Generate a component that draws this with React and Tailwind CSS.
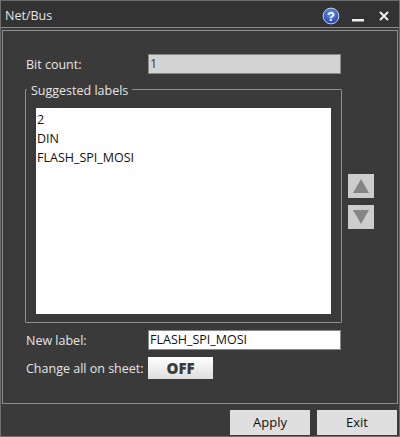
import React from 'react';

const Help = () => (
  <svg width="18" height="18" viewBox="0 0 18 18">
    <defs>
      <radialGradient id="helpBg" cx="50%" cy="35%" r="65%">
        <stop offset="0%" stopColor="#6f9bea" />
        <stop offset="100%" stopColor="#1c3fae" />
      </radialGradient>
    </defs>
    <circle cx="9" cy="9" r="7.9" fill="url(#helpBg)" stroke="#c9d3ea" strokeWidth="1" />
    <text x="9" y="14" textAnchor="middle" fontSize="13" fontWeight="700" fill="#fff" fontFamily="Liberation Sans, sans-serif">?</text>
  </svg>
);

const Arrow = ({ down }) => (
  <button className="w-[26px] h-[24px] bg-[#cdcdcd] flex items-center justify-center">
    <svg width="16" height="14" viewBox="0 0 16 14">
      <polygon points={down ? '0,0 16,0 8,14' : '0,14 16,14 8,0'} fill="#858585" />
    </svg>
  </button>
);

export default function App() {
  return (
    <div className="w-[400px] h-[437px] bg-[#3a3a3a] border border-[#6e6e6e] flex flex-col font-['Open_Sans','Noto_Sans',sans-serif] text-[12.5px] text-[#e6e6e6]">
      {/* Title bar */}
      <div className="h-[27px] flex items-center justify-between pl-[4px] pr-[9px] pt-[3px] bg-[#333333] border-b border-[#8a8a8a] shrink-0">
        <span className="text-[12.5px] pt-[1px]">Net/Bus</span>
        <div className="flex items-center">
          <Help />
          <svg width="14" height="14" viewBox="0 0 14 14" className="ml-[11px] mt-[2px]">
            <rect x="1" y="9" width="12" height="2.5" fill="#eeeeee" />
          </svg>
          <svg width="12" height="12" viewBox="0 0 12 12" className="ml-[13px]">
            <path d="M2 2 L10 10 M10 2 L2 10" stroke="#eeeeee" strokeWidth="2" />
          </svg>
        </div>
      </div>

      {/* Main panel */}
      <div className="mx-[1px] mt-[2px] h-[374px] border border-[#8f8f8f] pl-[22px] pt-[23px] shrink-0">
        <div className="flex items-center h-[20px]">
          <span className="w-[122px] ml-[1px] pt-[3px]">Bit count:</span>
          <div className="w-[193px] h-[20px] bg-[#d3d3d3] border border-[#8a8a8a] text-[#333] flex items-center pl-[1px] pt-[1px]">1</div>
        </div>

        <div className="flex items-start mt-[15px]">
          <fieldset className="w-[317px] h-[234px] border border-[#8f8f8f] rounded-[1px] px-[10px] pt-[9px] relative">
            <legend className="absolute top-[-9px] left-[1px] px-[4px] h-[18px] bg-[#3a3a3a] leading-[20px] text-[12.5px]">Suggested labels</legend>
            <div className="w-[295px] h-[206px] mt-[9px] bg-white text-[#111] pl-[1px] pt-[2px] leading-[19.5px]">
              <div>2</div>
              <div className="-mt-[0.5px]">DIN</div>
              <div className="-mt-[0.5px]">FLASH_SPI_MOSI</div>
            </div>
          </fieldset>
          <div className="flex flex-col gap-[7px] ml-[6px] mt-[85px]">
            <Arrow />
            <Arrow down />
          </div>
        </div>

        <div className="flex items-center h-[20px] mt-[7px]">
          <span className="w-[122px] ml-[1px] pt-[3px]">New label:</span>
          <div className="w-[193px] h-[20px] bg-white border border-[#8a8a8a] text-[#111] flex items-center pl-[1px]">FLASH_SPI_MOSI</div>
        </div>

        <div className="flex items-center h-[22px] mt-[7px]">
          <span className="w-[122px] ml-[1px] pt-[3px]">Change all on sheet:</span>
          <div className="w-[65px] h-[22px] bg-gradient-to-b from-white to-[#dedede] text-[#3a3a3a] font-extrabold text-[15px] flex items-center justify-center">OFF</div>
        </div>
      </div>

      {/* Footer */}
      <div className="flex justify-end gap-[7px] pr-[2px] mt-[6px]">
        <button className="w-[80px] h-[25px] bg-[#dfdfdf] text-[#111] text-[13px]">Apply</button>
        <button className="w-[80px] h-[25px] bg-[#dfdfdf] text-[#111] text-[13px]">Exit</button>
      </div>
    </div>
  );
}
